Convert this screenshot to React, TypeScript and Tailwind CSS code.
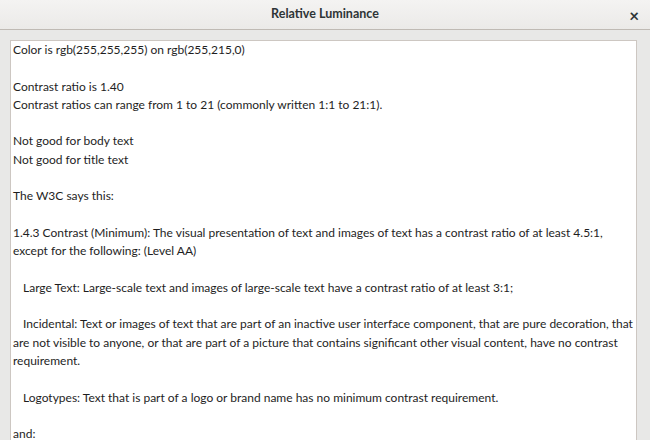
import React from "react";

const lines: { t: string; indent?: boolean }[] = [
  { t: "Color is rgb(255,255,255) on rgb(255,215,0)" },
  { t: "" },
  { t: "Contrast ratio is 1.40" },
  { t: "Contrast ratios can range from 1 to 21 (commonly written 1:1 to 21:1)." },
  { t: "" },
  { t: "Not good for body text" },
  { t: "Not good for title text" },
  { t: "" },
  { t: "The W3C says this:" },
  { t: "" },
  { t: "1.4.3 Contrast (Minimum): The visual presentation of text and images of text has a contrast ratio of at least 4.5:1," },
  { t: "except for the following: (Level AA)" },
  { t: "" },
  { t: "Large Text: Large-scale text and images of large-scale text have a contrast ratio of at least 3:1;", indent: true },
  { t: "" },
  { t: "Incidental: Text or images of text that are part of an inactive user interface component, that are pure decoration, that", indent: true },
  { t: "are not visible to anyone, or that are part of a picture that contains significant other visual content, have no contrast" },
  { t: "requirement." },
  { t: "" },
  { t: "Logotypes: Text that is part of a logo or brand name has no minimum contrast requirement.", indent: true },
  { t: "" },
  { t: "and:" },
];

export default function App() {
  return (
    <div
      className="w-[650px] h-[440px] overflow-hidden bg-[#e8e8e7] flex flex-col"
      style={{ fontFamily: 'Lato, "Noto Sans", sans-serif' }}
    >
      <div className="h-[30px] shrink-0 flex items-center justify-center relative bg-gradient-to-b from-[#f4f3f2] to-[#ebeae8] border-b border-[#bfbab4]">
        <span className="text-[12.5px] font-bold text-[#2e3436]">Relative Luminance</span>
        <span className="absolute right-[11px] top-[3px] text-[17px] font-bold text-[#2e3436]">×</span>
      </div>
      <div className="flex-1 flex pt-[10px] pl-[10px] pr-[13px]">
        <div className="flex-1 bg-white border border-[#cdc7c2] border-b-0 pl-[2px] text-[12px] leading-[18.3px] text-[#1e1e1e]">
          {lines.map((l, i) => (
            <div key={i} className={"whitespace-nowrap h-[18.3px] " + (l.indent ? "pl-[10px]" : "")}>
              {l.t}
            </div>
          ))}
        </div>
      </div>
    </div>
  );
}
